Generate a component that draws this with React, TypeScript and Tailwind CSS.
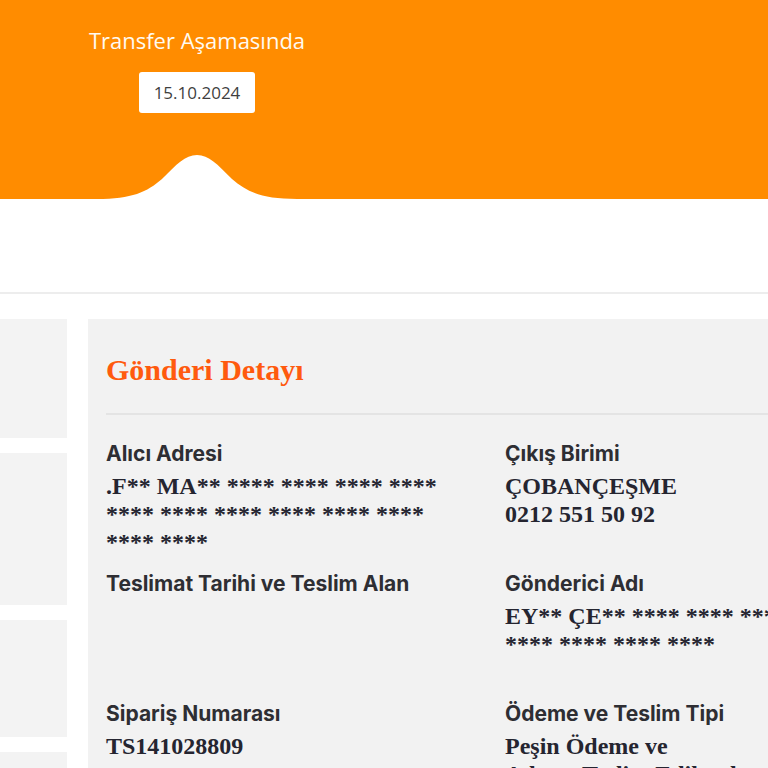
import React from "react";

const serif = { fontFamily: '"Liberation Serif", "Times New Roman", serif' };

function Field({ label, lines }: { label: string; lines: string[] }) {
  return (
    <div className="min-h-[130px]">
      <div className="text-[21px] leading-[26px] font-bold text-[#2e2e33] font-['Inter',sans-serif]">
        {label}
      </div>
      <div className="mt-[5px] text-[24px] leading-[28px] font-bold text-[#252530] whitespace-nowrap" style={serif}>
        {lines.map((l, i) => (
          <div key={i}>{l}</div>
        ))}
      </div>
    </div>
  );
}

export default function App() {
  return (
    <div className="w-[768px] h-[768px] overflow-hidden bg-white">
      {/* status header */}
      <div className="relative h-[199px] bg-[#ff8c00]">
        <div className="w-[394px] flex flex-col items-center pt-[24px]">
          <div className="text-[22px] leading-[32px] text-[#fffaf0] font-['Open_Sans',sans-serif]">
            Transfer Aşamasında
          </div>
          <div className="mt-[16px] w-[116px] h-[41px] bg-white rounded-[3px] flex items-center justify-center text-[17px] text-[#3f3f3f] font-['Open_Sans',sans-serif]">
            15.10.2024
          </div>
        </div>
        <svg className="absolute left-[97px] top-[154px]" width="200" height="46" viewBox="0 0 200 46">
          <path
            d="M0,46 L0,45 C35,45 50,38 65,25 C80,10 88,1 100,1 C112,1 120,10 135,25 C150,38 165,45 200,45 L200,46 Z"
            fill="#ffffff"
          />
        </svg>
      </div>

      <div className="h-[93px]" />
      <div className="h-[2px] bg-[#ededed]" />

      <div className="flex gap-[21px] pt-[25px]">
        <div className="w-[67px] shrink-0 flex flex-col gap-[15px]">
          <div className="h-[119px] bg-[#f3f3f3]" />
          <div className="h-[152px] bg-[#f3f3f3]" />
          <div className="h-[117px] bg-[#f3f3f3]" />
          <div className="h-[120px] bg-[#f3f3f3]" />
        </div>

        <div className="w-[820px] shrink-0 bg-[#f2f2f2] pl-[18px] pt-[33px] pb-10">
          <h2 className="text-[30px] leading-[36px] font-bold text-[#ff5a0e]" style={serif}>
            Gönderi Detayı
          </h2>
          <div className="mt-[25px] h-[2px] bg-[#e4e4e4]" />
          <div className="mt-[26px] grid grid-cols-[399px_399px]">
            <Field
              label="Alıcı Adresi"
              lines={[".F** MA** **** **** **** ****", "**** **** **** **** **** ****", "**** ****"]}
            />
            <Field label="Çıkış Birimi" lines={["ÇOBANÇEŞME", "0212 551 50 92"]} />
            <Field label="Teslimat Tarihi ve Teslim Alan" lines={[]} />
            <Field label="Gönderici Adı" lines={["EY** ÇE** **** **** **** ****", "**** **** **** ****"]} />
            <Field label="Sipariş Numarası" lines={["TS141028809"]} />
            <Field label="Ödeme ve Teslim Tipi" lines={["Peşin Ödeme ve", "Adrese Teslim Edilecek"]} />
          </div>
        </div>
      </div>
    </div>
  );
}
